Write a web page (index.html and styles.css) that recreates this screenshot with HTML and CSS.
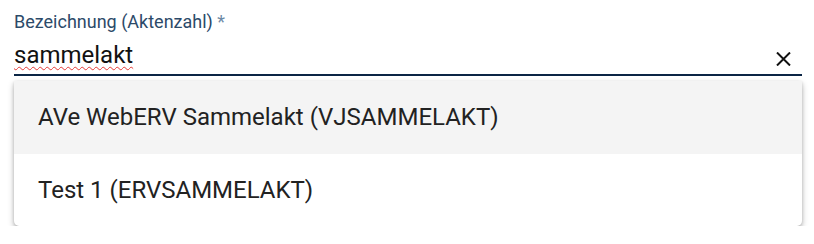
FILE: index.html
```html
<!DOCTYPE html>
<html lang="de">
<head>
<meta charset="utf-8">
<link rel="stylesheet" href="styles.css">
</head>
<body>
<div class="field">
  <label class="label">Bezeichnung (Aktenzahl) <span class="req">*</span></label>
  <div class="input-row">
    <span class="value">sammelakt</span>
    <span class="clear">
      <svg width="15" height="14" viewBox="0 0 15 14"><path d="M1 0.5 L14 13.5 M14 0.5 L1 13.5" stroke="#111" stroke-width="2" fill="none"/></svg>
    </span>
  </div>
  <div class="panel">
    <div class="option active">AVe WebERV Sammelakt (VJSAMMELAKT)</div>
    <div class="option">Test 1 (ERVSAMMELAKT)</div>
  </div>
</div>
</body>
</html>
```
FILE: styles.css
```css
html, body {
  margin: 0;
  padding: 0;
  background: #fff;
  font-family: Roboto, "Liberation Sans", sans-serif;
}
.field {
  margin: 0 12px 0 14px;
  padding-top: 11px;
  width: 788px;
}
.label {
  display: block;
  font-size: 18px;
  line-height: 22px;
  color: #2c4a69;
}
.req {
  color: #6d8aa6;
}
.input-row {
  display: flex;
  align-items: flex-end;
  justify-content: space-between;
  height: 43px;
  padding-bottom: 5px;
  border-bottom: 2px solid #0b2545;
  box-sizing: border-box;
}
.value {
  font-size: 24px;
  line-height: 28px;
  color: #111;
  text-decoration: underline wavy #e53935;
  text-decoration-thickness: 1px;
  text-underline-offset: 3px;
}
.clear {
  display: flex;
  padding: 0 11px 3px 0;
}
.panel {
  margin-top: 5px;
  background: #fff;
  border-radius: 0 0 5px 5px;
  box-shadow: 0 3px 6px rgba(0,0,0,0.28), 0 1px 3px rgba(0,0,0,0.14);
  overflow: hidden;
}
.option {
  height: 72.5px;
  display: flex;
  align-items: center;
  padding-left: 24px;
  font-size: 24px;
  color: #222;
}
.option.active {
  background: #f4f4f4;
}
```
